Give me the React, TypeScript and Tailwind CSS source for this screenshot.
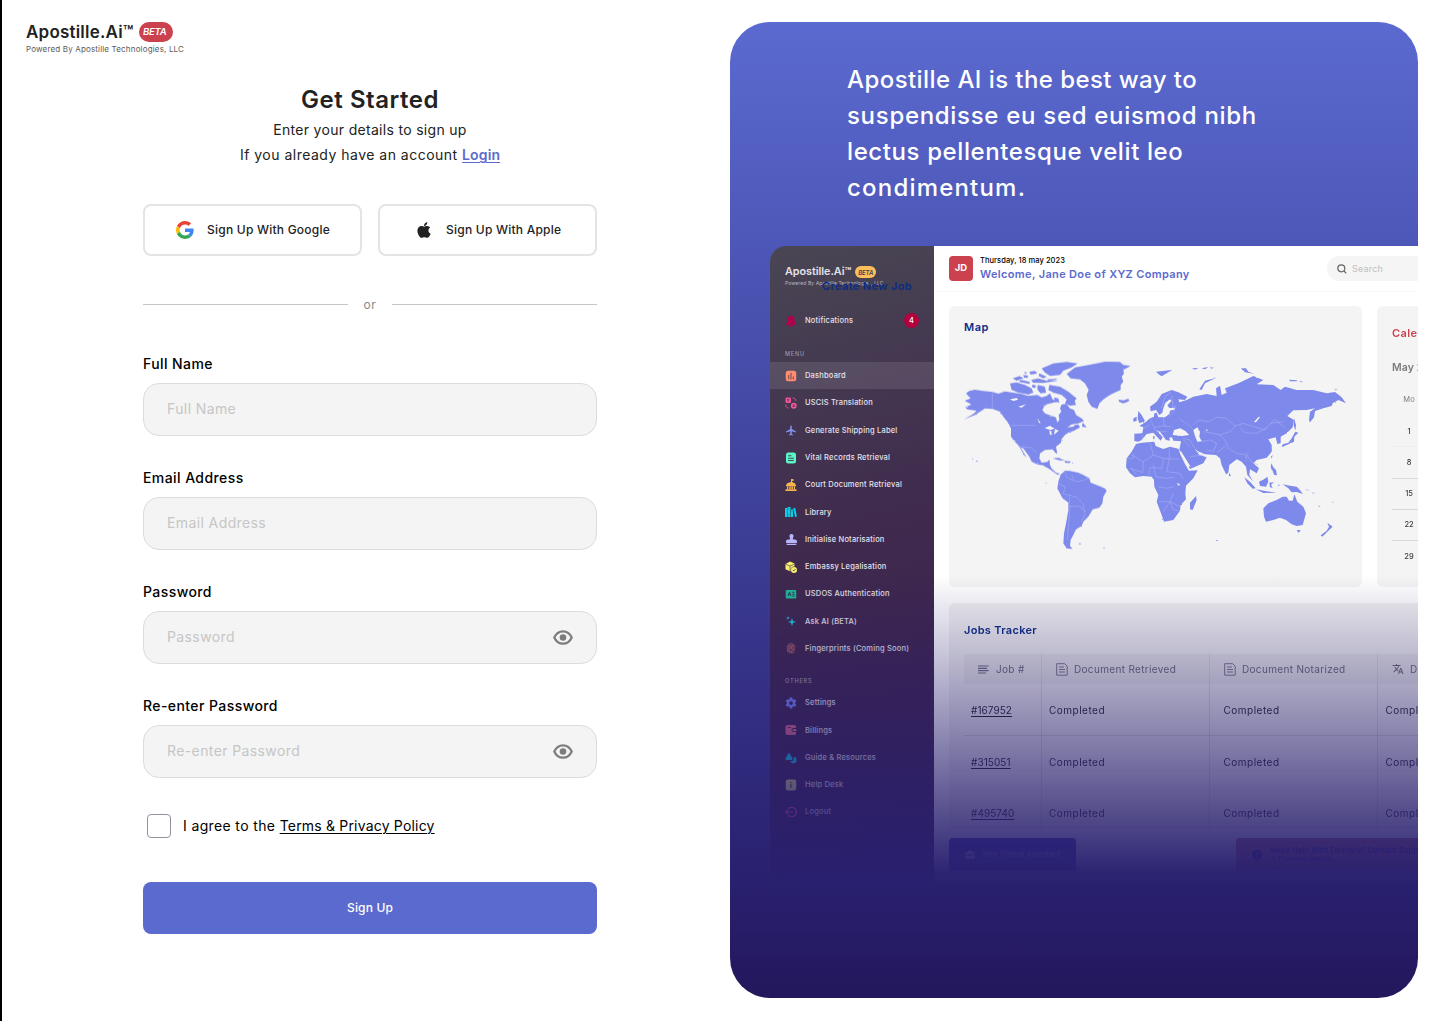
import type { ReactNode } from "react";
import { FaApple, FaStamp } from "react-icons/fa";
import { IoSettingsSharp } from "react-icons/io5";
import { MdFingerprint, MdLocalAirport, MdTranslate } from "react-icons/md";

/* ---------- Sign-up form ---------- */

function GoogleLogo() {
  return (
    <svg viewBox="0 0 48 48" className="size-[18px]">
      <path fill="#EA4335" d="M24 9.5c3.54 0 6.71 1.22 9.21 3.6l6.85-6.85C35.9 2.38 30.47 0 24 0 14.62 0 6.51 5.38 2.56 13.22l7.98 6.19C12.43 13.72 17.74 9.5 24 9.5z" />
      <path fill="#4285F4" d="M46.98 24.55c0-1.57-.15-3.09-.38-4.55H24v9.02h12.94c-.58 2.96-2.26 5.48-4.78 7.18l7.73 6c4.51-4.18 7.09-10.36 7.09-17.65z" />
      <path fill="#FBBC05" d="M10.53 28.59c-.48-1.45-.76-2.99-.76-4.59s.27-3.14.76-4.59l-7.98-6.19C.92 16.46 0 20.12 0 24c0 3.88.92 7.54 2.56 10.78l7.97-6.19z" />
      <path fill="#34A853" d="M24 48c6.48 0 11.93-2.13 15.89-5.81l-7.73-6c-2.15 1.45-4.92 2.3-8.16 2.3-6.26 0-11.57-4.22-13.47-9.91l-7.98 6.19C6.51 42.62 14.62 48 24 48z" />
    </svg>
  );
}

function Eye() {
  return (
    <svg viewBox="0 0 20 15" className="h-[15px] w-5">
      <path d="M1.3 7.5C3 3.6 6.2 1.3 10 1.3s7 2.3 8.7 6.2c-1.7 3.9-4.9 6.2-8.7 6.2S3 11.4 1.3 7.5z" fill="none" stroke="#7d7d7d" strokeWidth="2.2" />
      <circle cx="10" cy="7.5" r="3.3" fill="#7d7d7d" />
    </svg>
  );
}

function Field({ label, secret }: { label: string; secret?: boolean }) {
  return (
    <div className="flex h-[114px] flex-col">
      <div className="h-[29px] text-sm leading-5 font-medium tracking-[0.03em] text-black">{label}</div>
      <div className="flex h-[53px] items-center justify-between rounded-2xl border border-[#dcdcdc] bg-[#f4f4f4] px-[23px] text-sm tracking-[0.028em] text-[#c6c6c6]">
        <span className="pb-0.5">{label}</span>
        {secret && <Eye />}
      </div>
    </div>
  );
}

function SignUpForm() {
  return (
    <section className="flex w-[728px] shrink-0 flex-col pt-[22px] pl-6">
      <div className="flex h-5 items-center gap-[5px]">
        <span className="pt-0.5 text-[17px] font-semibold tracking-[0.012em]">Apostille.Ai™</span>
        <span className="flex h-5 w-[34px] items-center justify-center rounded-[10px] bg-[#cb414e] pr-0.5 text-[9.5px] font-semibold tracking-[-0.02em] text-white italic">BETA</span>
      </div>
      <div className="h-[15px] text-[8px] leading-[15px] tracking-[0.02em] text-[#5a5a5a]">Powered By Apostille Technologies, LLC</div>

      <div className="ml-[117px] flex w-[454px] flex-col">
        <header className="flex flex-col items-center pt-[25px] text-sm leading-[25px]">
          <h1 className="h-[35px] text-2xl leading-9 font-semibold tracking-[0.022em]">Get Started</h1>
          <p className="tracking-[0.022em]">Enter your details to sign up</p>
          <p className="tracking-[0.035em]">
            If you already have an account{" "}
            <a className="font-semibold tracking-[0.008em] text-[#5b6acf] underline decoration-1 underline-offset-2">Login</a>
          </p>
        </header>

        <div className="mt-[37px] flex gap-4 text-xs font-medium tracking-[0.019em]">
          <button className="flex h-[52px] w-[219px] items-center rounded-lg border-2 border-[#e4e4e4] pl-[31px]">
            <GoogleLogo />
            <span className="ml-[13px]">Sign Up With Google</span>
          </button>
          <button className="flex h-[52px] w-[219px] items-center rounded-lg border-2 border-[#e4e4e4] pl-[35px]">
            <FaApple className="size-[18px]" />
            <span className="ml-[13px]">Sign Up With Apple</span>
          </button>
        </div>

        <div className="mt-[39px] flex h-5 items-center text-xs tracking-[0.05em] text-[#8a8a8a]">
          <span className="mb-0.5 h-px w-[205px] bg-[#c6c6c6]" />
          <span className="flex-1 text-center">or</span>
          <span className="mb-0.5 h-px w-[205px] bg-[#c6c6c6]" />
        </div>

        <div className="mt-[39px]">
          <Field label="Full Name" />
          <Field label="Email Address" />
          <Field label="Password" secret />
          <Field label="Re-enter Password" secret />
        </div>

        <div className="mt-1 flex h-6 items-center pl-1 text-sm text-black">
          <span className="size-6 rounded border border-[#8d93a1]" />
          <span className="ml-3 tracking-[0.026em]">
            I agree to the <a className="tracking-[0.0136em] underline decoration-1 underline-offset-2">Terms &amp; Privacy Policy</a>
          </span>
        </div>

        <button className="mt-11 h-[52px] rounded-lg bg-[#5b6acf] text-xs font-medium tracking-[0.013em] text-white">Sign Up</button>
      </div>
    </section>
  );
}

/* ---------- Sidebar icons ---------- */

function Glyph({ children }: { children: ReactNode }) {
  return (
    <svg viewBox="0 0 24 24" className="size-3">
      {children}
    </svg>
  );
}

const bell = (
  <Glyph>
    <path fill="#b5004a" d="M12 0l1.500 2C17 2.600 19 5 19 8.500V13l3 5v1.500H2V18l3-5V8.500C5 5 7 2.600 10.500 2zM8 20.500h8a4 3.500 0 0 1-8 0z" />
    <path d="M10 7q4 0 4 4" fill="none" stroke="#7c1d4c" strokeWidth="1.500" />
  </Glyph>
);
const dashboard = (
  <Glyph>
    <rect x="1.5" y="1.5" width="21" height="21" rx="5" fill="#ff8e72" />
    <path d="M7.5 11v7M12 6.5V18M16.5 14v4" stroke="#6b4452" strokeWidth="2" strokeLinecap="round" />
  </Glyph>
);
const translation = (
  <Glyph>
    <rect x="1" y="1" width="11" height="11" rx="2.5" fill="#f5569b" />
    <path d="M4 4.500h5M4.500 9l4-4M4.500 5.500l4 3.500" stroke="#4a3350" strokeWidth="1.2" />
    <circle cx="17.5" cy="17.5" r="5.8" fill="#f5569b" />
    <path d="M15 20l2.500-5.500L20 20M16 18.500h3" stroke="#4a3350" strokeWidth="1.2" fill="none" />
    <path d="M15.500 2c4 0 6 2 6.500 6M1.500 15.500c0 4.500 2 6.500 6.500 6.500" stroke="#f5569b" strokeWidth="2" fill="none" strokeDasharray="4 1.5" />
  </Glyph>
);
const records = (
  <Glyph>
    <rect x="2" y="1" width="20" height="22" rx="4.5" fill="#5cf5c8" />
    <path d="M7 7.500h5M7 12.500h10M7 17h10" stroke="#3b4a5e" strokeWidth="2" strokeLinecap="round" />
  </Glyph>
);
const court = (
  <Glyph>
    <path fill="#f7b34e" d="M11 0h6v4h-3v2l6 2.500V11h2v3.500H2V11h2V8.500l8-2.500V0zM4 15h2.500v5H4zM8.500 15h3v5h-3zM12.800 15h3v5h-3zM17.500 15H20v5h-2.500zM1 20.500h22V24H1z" />
  </Glyph>
);
const library = (
  <Glyph>
    <path fill="#09cfe8" d="M0 4h4v18H0zM5 2h6v20H5zM12 7h4v15h-4zM16.500 4.500l3.800-1L23.800 21l-4 1z" />
    <path d="M7 6h2M7 18h2M13 10h2" stroke="#36405f" strokeWidth="1.2" />
  </Glyph>
);
const embassy = (
  <Glyph>
    <path fill="#f6f06c" d="M10 1l9 4v6a7 7 0 0 0-7.500 9l-1.500.5-9-4V6z" />
    <path d="M1.500 6.500L10 10l9-4M10 10v10" stroke="#4a3350" strokeWidth="1.3" fill="none" />
    <circle cx="18" cy="18" r="6" fill="#f6f06c" />
    <path d="M15.500 18l2 2 3.500-4" stroke="#4a3350" strokeWidth="1.6" fill="none" />
  </Glyph>
);
const idCard = (
  <Glyph>
    <rect x="1.5" y="4" width="21" height="17" rx="1.5" fill="#22b795" />
    <path d="M6 16l3-8 3 8M7 13.500h4M14.500 8.500H19M14.500 12.500H19M14.500 16H19" stroke="#2b3157" strokeWidth="1.7" fill="none" />
  </Glyph>
);
const sparkle = (
  <Glyph>
    <path fill="#1fc0dc" d="M14 6l2 6 6 2-6 2-2 6-2-6-6-2 6-2zM6 2l1 3 3 1-3 1-1 3-1-3-3-1 3-1z" />
  </Glyph>
);
const wallet = (
  <Glyph>
    <path fill="#e0648b" d="M5 2h14a3 3 0 0 1 3 3v3h-5a4 4 0 0 0 0 8h5v3a3 3 0 0 1-3 3H5a4 4 0 0 1-4-4V6a4 4 0 0 1 4-4z" />
    <rect x="15" y="10" width="8" height="4.5" rx="2" fill="#e0648b" />
    <path d="M5 7h7" stroke="#40275a" strokeWidth="1.6" />
  </Glyph>
);
const shapes = (
  <Glyph>
    <path fill="#0ec6ea" d="M8 1l7 12a2 2 0 0 1-2 3H3a2 2 0 0 1-2-3z" />
    <path fill="#0ec6ea" d="M17.500 9.500a6.500 6.500 0 1 1-7 8.500h4a4 4 0 0 0 3-5z" />
  </Glyph>
);
const info = (
  <Glyph>
    <rect x="1.5" y="1" width="21" height="22" rx="4" fill="#d8d07c" />
    <path d="M12 11v6.500M12 6v2.300M10.500 11.500H12" stroke="#3a2660" strokeWidth="2.4" />
  </Glyph>
);
const logout = (
  <Glyph>
    <path d="M6 6a9.500 9.500 0 1 1 0 12M16 12H2M5.500 8L1.500 12l4 4" stroke="#f04fae" strokeWidth="2.4" fill="none" />
  </Glyph>
);

const menu: [string, ReactNode][] = [
  ["Dashboard", dashboard],
  ["USCIS Translation", translation],
  ["Generate Shipping Label", <MdLocalAirport className="size-[13px] text-[#8592f2]" />],
  ["Vital Records Retrieval", records],
  ["Court Document Retrieval", court],
  ["Library", library],
  ["Initialise Notarisation", <FaStamp className="size-[11px] text-[#b9b5fa]" />],
  ["Embassy Legalisation", embassy],
  ["USDOS Authentication", idCard],
  ["Ask AI (BETA)", sparkle],
  ["Fingerprints (Coming Soon)", <MdFingerprint className="size-[13px] text-[#e07a6c]" />],
];

const others: [string, ReactNode][] = [
  ["Settings", <IoSettingsSharp className="size-3 text-[#7585f7]" />],
  ["Billings", wallet],
  ["Guide & Resources", shapes],
  ["Help Desk", info],
  ["Logout", logout],
];

function MenuRow({ label, icon, active }: { label: string; icon: ReactNode; active?: boolean }) {
  return (
    <div className={"flex h-[27.3px] items-center pl-[15px] " + (active ? "bg-white/10" : "")}>
      <span className="flex w-3 justify-center">{icon}</span>
      <span className="ml-2 whitespace-nowrap">{label}</span>
    </div>
  );
}

function Sidebar() {
  return (
    <aside className="relative flex w-[164px] shrink-0 flex-col bg-[linear-gradient(165deg,#494653_0%,#402c4e_42%,#3c234e_70%,#3a1d50_100%)] pt-5 text-[7.5px] font-medium tracking-[0.026em] text-[#e4e1ec]">
      <div className="flex h-3 items-center gap-1 pl-[15px]">
        <span className="text-[10.8px] font-semibold tracking-[-0.004em] whitespace-nowrap">Apostille.Ai™</span>
        <span className="flex h-3 w-[21px] items-center justify-center rounded-md bg-[#fcbf5c] text-[6px] font-semibold tracking-[-0.02em] text-[#45414f] italic">BETA</span>
      </div>
      <div className="h-[10px] pl-[15px] text-[5px] leading-[10px] font-normal tracking-[0.019em] whitespace-nowrap text-[#b9b6c2]">Powered By Apostille Technologies, LLC</div>
      <div className="absolute top-[33px] left-[52px] text-[11px] leading-[14px] font-semibold tracking-[0.034em] whitespace-nowrap text-[#0b2b85]">Create New Job</div>

      <div className="mt-[25px] flex h-[15px] items-center pr-[15px] pl-[15px]">
        {bell}
        <span className="ml-2 flex-1">Notifications</span>
        <span className="flex size-[15px] items-center justify-center rounded-full bg-[#b3003f] text-white">4</span>
      </div>
      <div className="mt-[21px] h-[10px] pl-[15px] text-[5.5px] leading-[10px] tracking-[0.15em] text-[#9a95a5]">MENU</div>
      <div className="mt-[3px]">
        {menu.map(([label, icon], i) => (
          <MenuRow key={label} label={label} icon={icon} active={i === 0} />
        ))}
      </div>
      <div className="mt-[14px] h-[10px] pl-[15px] text-[5.5px] leading-[10px] tracking-[0.16em] text-[#a7a1b8]">OTHERS</div>
      <div className="mt-[3px]">
        {others.map(([label, icon]) => (
          <MenuRow key={label} label={label} icon={icon} />
        ))}
      </div>
    </aside>
  );
}

/* ---------- World map ---------- */

function WorldMap() {
  return (
    <svg viewBox="0 0 1230 660" className="h-[220px] w-[410px]">
      <defs>
        <filter id="coast" x="-2%" y="-2%" width="104%" height="104%">
          <feTurbulence type="fractalNoise" baseFrequency="0.12" numOctaves="2" seed="4" />
          <feDisplacementMap in="SourceGraphic" scale="5" xChannelSelector="R" yChannelSelector="G" />
        </filter>
      </defs>
      <g filter="url(#coast)" fill="#7e89ec">
        <path d="M48 160L58 153L75 149L100 153L128 156L145 161L165 154L190 158L215 162L235 168L262 165L275 172L290 168L300 160L308 178L325 185L300 190L285 195L277 210L285 220L305 228L318 232L322 247L328 240L326 225L334 215L330 205L335 193L350 192L360 205L372 210L378 225L395 235L402 243L385 250L365 253L352 262L370 260L375 255L385 253L390 262L372 272L355 278L345 285L335 297L333 308L318 320L322 342L315 337L308 328L285 330L270 340L268 355L275 368L292 366L298 358L300 375L305 385L318 398L332 402L322 404L300 388L280 376L262 373L245 365L238 350L220 325L212 322L230 352L222 345L207 318L190 300L183 290L183 265L172 245L160 230L150 215L128 207L105 205L90 215L75 225L42 238L70 222L80 212L52 208L46 202L64 193L44 182L62 175Z" />
        <path d="M180 130L200 127L225 135L245 145L250 158L235 163L205 158L185 150ZM298 135L330 140L355 155L380 175L374 183L378 195L360 197L345 190L350 178L335 165L310 158L295 150ZM275 85L310 70L350 66L383 70L365 82L340 92L330 105L300 108L285 98ZM188 115L210 108L220 115L200 122ZM238 95L255 93L262 100L242 104ZM243 120L265 115L290 122L325 122L280 129L250 128ZM263 135L285 140L288 158L272 160L262 148ZM220 105L235 107L232 114L222 113ZM268 100L290 110L280 115L266 108ZM312 172L325 175L328 188L315 184ZM398 247L410 262L396 260ZM222 96L232 98L226 102ZM205 125L215 120L240 126L238 132ZM290 118L322 116L318 120L296 122ZM246 134L258 136L256 144L247 142Z" />
        <path d="M350 102L375 82L420 74L465 65L510 66L520 75L542 78L520 90L522 100L515 110L520 125L512 135L512 150L500 155L480 165L460 178L448 190L442 207L425 200L415 185L410 165L416 150L405 130L390 118L362 115Z" />
        <path d="M505 178L520 181L535 176L538 183L520 190L508 186ZM308 355L325 353L345 362L330 361ZM343 363L362 364L360 369L346 369ZM366 367L371 369L367 370ZM385 610L394 610L390 614ZM460 622L466 626L461 626ZM66 355L70 356L68 359ZM78 361L84 363L80 366ZM287 428L291 430L288 432Z" />
        <path d="M332 404L345 392L360 393L385 398L400 405L418 415L422 428L445 437L465 445L470 453L460 470L457 490L448 503L428 508L415 530L400 545L395 558L378 568L370 585L362 600L360 618L368 627L350 625L340 610L342 580L350 540L355 510L355 487L338 475L322 445L325 425Z" />
        <g transform="translate(480 0)">
          <path d="M78 312L95 308L133 305L137 318L160 327L180 320L205 326L212 345L225 372L237 392L263 391L250 415L228 437L226 460L228 478L212 495L210 512L190 540L162 545L155 525L140 485L145 465L133 440L132 420L125 410L100 408L75 412L60 400L48 382L50 355L65 335ZM258 468L260 480L248 510L240 508L240 488Z" />
          <path d="M73 303L73 281L97 280L100 262L88 258L108 245L120 235L132 230L133 220L140 218L145 232L165 232L178 222L180 212L196 208L194 203L178 204L172 196L184 183L180 178L166 188L160 205L157 218L148 225L138 210L122 214L120 200L140 185L155 162L185 150L205 157L232 170L225 180L205 178L208 187L230 180L250 170L290 162L320 168L318 145L330 137L335 165L350 158L345 145L385 130L410 118L430 108L460 120L440 133L490 135L512 150L525 140L560 150L610 150L650 160L675 156L695 172L708 190L685 180L668 190L665 198L640 205L615 213L612 232L600 247L597 240L600 215L615 205L590 210L550 211L532 228L552 240L548 262L530 280L512 290L512 310L502 312L497 292L475 298L485 315L485 335L470 353L440 360L430 370L447 385L440 400L420 388L418 405L430 425L412 405L408 380L395 365L380 358L358 375L355 398L348 403L335 375L330 355L318 345L285 343L262 333L253 325L268 345L290 352L280 370L240 387L225 360L208 330L213 304L190 302L186 292L178 293L180 302L168 300L150 275L140 270L158 292L152 302L130 278L110 282L95 300L85 305Z" />
          <path d="M85 213L95 225L105 243L88 250L83 235ZM70 235L80 230L80 243L70 245ZM268 148L285 122L320 113L300 122L285 130L275 150ZM138 95L165 92L187 90L165 103L155 109L146 103ZM393 85L408 85L415 95L433 101L405 97ZM538 119L560 121L562 124L540 124ZM568 123L580 125L572 127ZM246 85L265 84L255 89ZM275 85L295 81L285 88ZM300 82L312 83L304 86ZM673 148L684 149L676 151Z" />
          <path d="M543 298L552 282L556 275L565 278L553 290L552 305L530 315L515 322L518 313L535 308ZM552 235L558 255L556 272L551 255ZM484 370L490 382L498 390L501 406L492 404L487 390L482 382ZM483 350L488 345L485 356ZM403 412L420 425L437 445L428 446L412 430ZM437 448L470 454L500 458L460 459ZM447 425L462 418L472 410L475 425L468 440L450 438ZM478 428L492 427L483 434L488 443L480 442ZM505 432L509 436L506 440ZM518 433L540 437L560 440L570 450L578 462L560 456L545 457L535 445ZM357 398L363 407L357 409ZM130 287L134 289L133 298L129 296ZM588 446L598 453L590 450ZM605 456L616 462L608 460ZM625 495L632 501L627 500ZM667 486L671 485L668 489ZM318 600L325 601L320 604Z" />
          <path d="M460 505L475 490L500 480L518 470L530 470L537 482L548 482L553 463L562 485L580 500L588 520L578 555L560 558L545 553L528 540L510 533L490 540L468 545L462 530ZM560 570L572 570L566 579ZM652 548L668 560L655 572L637 590L632 586L650 572L657 560Z" />
        </g>
        <g fill="#f4f4f4">
          <path d="M180 178L200 174L204 179L190 183ZM205 200L228 193L215 203ZM262 234L272 250L267 249ZM284 264L300 257L314 266L300 270ZM298 272L304 272L305 285L300 284ZM315 267L326 272L312 284Z" />
          <path d="M668 285L672 270L690 265L705 272L718 285L695 288ZM730 270L742 262L750 275L748 290L755 304L742 305L735 288ZM680 430L690 432L686 438ZM768 268L774 270L770 274ZM912 246L926 230L930 232L918 247ZM692 332L722 380L716 382L690 340Z" />
        </g>
        <g fill="none" stroke="#aab1f3" strokeWidth="1.6">
          <path d="M127 157V207M183 256H256M205 319L245 324L262 340M345 395L350 412L378 425L400 422L418 412M325 430L345 440L340 462L358 465L380 472L398 490L405 520L395 545M358 465L360 500L352 600M360 500L385 498L408 515M365 405L372 420" />
          <path d="M545 345L580 365L610 345L600 308M580 365L578 398L540 385M610 345L640 355L658 357V325M658 357H690M610 375L618 410M640 355L635 385L600 382M658 357L650 395L690 400L700 418M618 410L650 415L672 412M625 440L650 445L672 440M625 485L660 485L670 460M640 515L660 485L690 500M530 355H550V340M545 385L560 405M600 382L595 408M660 485L670 510L690 512" />
          <path d="M600 235L612 262L640 258L668 262M640 232L642 258M655 230L672 215L676 195M670 205L665 165M635 205L645 170L665 155M612 262L620 275L650 275M580 265L600 255M575 300L578 285M690 238L710 250L730 268M730 255L745 240L775 245L800 232L830 235L855 258L840 275L810 285L790 280L760 275M855 258L880 250L905 258L945 270L962 250L1000 245M870 262L885 278L920 280L950 262M962 250L975 238L1005 265M810 285L825 300L835 325L860 340L890 345L888 365M750 305L780 300L800 310L790 335L770 330M825 320L800 338M700 295L720 300L735 325M700 300L720 320M890 345L905 365L925 375M720 350L760 345M885 350L895 335" />
        </g>
      </g>
    </svg>
  );
}

/* ---------- Dashboard preview ---------- */

function DocIcon() {
  return (
    <svg viewBox="0 0 12 13" className="h-[13px] w-3 shrink-0" fill="none" stroke="#6f6c7b" strokeWidth="0.9">
      <path d="M.7.7h8l2.500 2.500v9H.7zM3 4h5M3 6.500h6M3 9h6" />
    </svg>
  );
}

function LinesIcon() {
  return (
    <svg viewBox="0 0 11 9" className="h-[9px] w-[11px] shrink-0" stroke="#6f6c7b" strokeWidth="1.2">
      <path d="M0 1h10.500M0 3.300h9M0 5.600h10.500M0 8h8" />
    </svg>
  );
}

const days = ["1", "8", "15", "22", "29"];

function CalendarCard() {
  return (
    <div className="h-[281px] w-[220px] shrink-0 rounded-md bg-[#f4f4f4] pl-[15px]">
      <div className="mt-[19px] h-4 text-[11px] leading-4 font-semibold tracking-[0.04em] text-[#cb414e]">Calendar</div>
      <div className="mt-[19px] h-4 text-[10.5px] leading-4 font-semibold tracking-[0.01em] text-[#7d7d7d]">May 2023</div>
      <div className="mt-[17px] h-[14px] w-[34px] text-center text-[7.5px] leading-[14px] text-[#7d7d7d]">Mo</div>
      <div className="mt-[9px] text-[7.5px] font-medium text-[#3d3d3d]">
        {days.map((d, i) => (
          <div key={d} className={"flex h-[31.3px] items-center " + (i === 4 ? "" : i === 0 ? "border-b border-[#efefef]" : "border-b border-[#d8d8d8]")}>
            <span className="w-[34px] text-center">{d}</span>
          </div>
        ))}
      </div>
    </div>
  );
}

const jobs = ["#167952", "#315051", "#495740"];

function JobsTracker() {
  return (
    <div className="mt-4 ml-[15px] h-[226px] w-[640px] rounded-t-md bg-[#f2f2f1] pl-[15px]">
      <div className="h-[51px] pt-[19px] text-[11px] leading-4 font-semibold tracking-[0.028em] text-[#0b2b85]">Jobs Tracker</div>
      <div className="grid h-[30px] grid-cols-[78px_168px_168px_211px] bg-[#e9e9e9] text-[10px] tracking-[0.033em] text-[#6a6876]">
        <div className="flex items-center gap-[7px] border-r border-[#dadada] pl-[14px]">
          <LinesIcon />
          Job #
        </div>
        <div className="flex items-center gap-[6px] border-r border-[#dadada] pl-[14px]">
          <DocIcon />
          Document Retrieved
        </div>
        <div className="flex items-center gap-[6px] border-r border-[#dadada] pl-[14px]">
          <DocIcon />
          Document Notarized
        </div>
        <div className="flex items-center gap-[6px] pl-[14px]">
          <MdTranslate className="size-3" />
          Document Translated
        </div>
      </div>
      {jobs.map((j, i) => (
        <div key={j} className={"grid grid-cols-[78px_168px_168px_211px] text-[10px] tracking-[0.05em] text-[#1d1a2b] " + (i === 2 ? "h-[42px]" : i === 0 ? "h-[52px] border-b border-[#d6d6d6]" : "h-[51px]")}>
          <div className="border-r border-[#dadada] pt-[18px] pl-[7px] leading-4">
            <a className="tracking-[0.007em] underline underline-offset-2">{j}</a>
          </div>
          <div className="border-r border-[#dadada] pt-[18px] pl-[7px] leading-4">Completed</div>
          <div className="border-r border-[#dadada] pt-[18px] pl-[13.5px] leading-4">Completed</div>
          <div className="pt-[18px] pl-[7.5px] leading-4">Completed</div>
        </div>
      ))}
    </div>
  );
}

function PreviewFooter() {
  return (
    <div className="flex h-[52px] w-[660px] pt-[9px] pl-[15px]">
      <div className="flex h-[33px] w-[127px] items-center rounded bg-[#323ba8] pl-4 text-[7.5px] font-medium tracking-[0.016em] whitespace-nowrap text-[#b0b4e4]">
        <svg viewBox="0 0 10 9" className="h-[9px] w-[10px]" fill="#c8cbee">
          <path d="M1 2h2V.8h4V2h2q1 0 1 1v1.500H0V3q0-1 1-1zM0 5.300h4V6h2v-.7h4V8q0 1-1 1H1Q0 9 0 8z" />
        </svg>
        <span className="ml-2">Hire Virtual Assistant</span>
      </div>
      <div className="ml-[160px] flex h-[33px] w-[240px] shrink-0 items-center rounded bg-[#b86a6c] pl-4">
        <span className="flex size-[10px] items-center justify-center rounded-full bg-[#1a118c] text-[8px] font-bold text-[#b86a6c]">?</span>
        <div className="ml-2 font-medium whitespace-nowrap text-[#1a118c]">
          <div className="text-[8px] leading-[10px] tracking-[-0.013em]">Need Help With Delivery? Contact Support</div>
          <div className="text-[6.5px] leading-[9px] tracking-[0.02em]">☆ Premium feature</div>
        </div>
      </div>
    </div>
  );
}

function DashboardPreview() {
  return (
    <div className="relative mt-10 ml-10 flex h-[635px] w-[648px] overflow-hidden rounded-l-2xl">
      <Sidebar />
      <div className="w-[484px] shrink-0 overflow-hidden bg-white">
        <div className="flex h-[46px] items-start border-b border-[#f8f8f8] pt-[10px] pl-[15px]">
          <span className="flex h-[25px] w-6 shrink-0 items-center justify-center rounded bg-[#cb414e] text-[9.5px] font-bold text-white">JD</span>
          <div className="ml-[7px] w-[347px] shrink-0">
            <div className="h-[9px] text-[7.5px] leading-[9px] font-medium tracking-[0.009em] text-black">Thursday, 18 may 2023</div>
            <div className="text-[11px] leading-[18px] font-semibold tracking-[0.031em] text-[#5b6acf]">Welcome, Jane Doe of XYZ Company</div>
          </div>
          <div className="flex h-[25px] w-[180px] shrink-0 items-center rounded-full bg-[#f5f5f5] pl-[10px] text-[9px] tracking-[0.021em] text-[#c0c0c0]">
            <svg viewBox="0 0 10 10" className="size-[10px]" fill="none" stroke="#666" strokeWidth="1.2">
              <circle cx="4.3" cy="4.3" r="3.5" />
              <path d="M7 7l2.300 2.300" />
            </svg>
            <span className="ml-[5px]">Search</span>
          </div>
        </div>
        <div className="mt-[14px] flex gap-[15px] pl-[15px]">
          <div className="h-[281px] w-[413px] shrink-0 overflow-hidden rounded-md bg-[#f4f4f4] pl-px">
            <div className="h-[34px] pt-[13px] pl-[14px] text-[11px] leading-4 font-semibold tracking-[0.05em] text-[#0b2b85]">Map</div>
            <WorldMap />
          </div>
          <CalendarCard />
        </div>
        <JobsTracker />
        <PreviewFooter />
      </div>
      <div className="pointer-events-none absolute inset-x-0 bottom-0 h-[306px] bg-[linear-gradient(180deg,rgba(41,32,111,0)_0%,rgba(41,32,111,0.84)_83%,rgba(41,32,111,0.99)_98%)]" />
    </div>
  );
}

export default function App() {
  return (
    <div className="flex h-[1021px] w-[1438px] overflow-hidden border-l-2 border-black bg-white font-['Inter',sans-serif] text-[#222]">
      <SignUpForm />
      <section className="mt-[22px] flex h-[976px] w-[688px] shrink-0 flex-col overflow-hidden rounded-[40px] bg-[linear-gradient(180deg,#5b6ad0_0%,#4d57b7_23%,#29206f_88%,#23175c_100%)]">
        <h2 className="mt-10 ml-[117px] text-2xl leading-9 font-medium whitespace-nowrap text-white">
          <span className="block tracking-[0.018em]">Apostille AI is the best way to</span>
          <span className="block tracking-[0.029em]">suspendisse eu sed euismod nibh</span>
          <span className="block tracking-[0.025em]">lectus pellentesque velit leo</span>
          <span className="block tracking-[0.05em]">condimentum.</span>
        </h2>
        <DashboardPreview />
      </section>
    </div>
  );
}
